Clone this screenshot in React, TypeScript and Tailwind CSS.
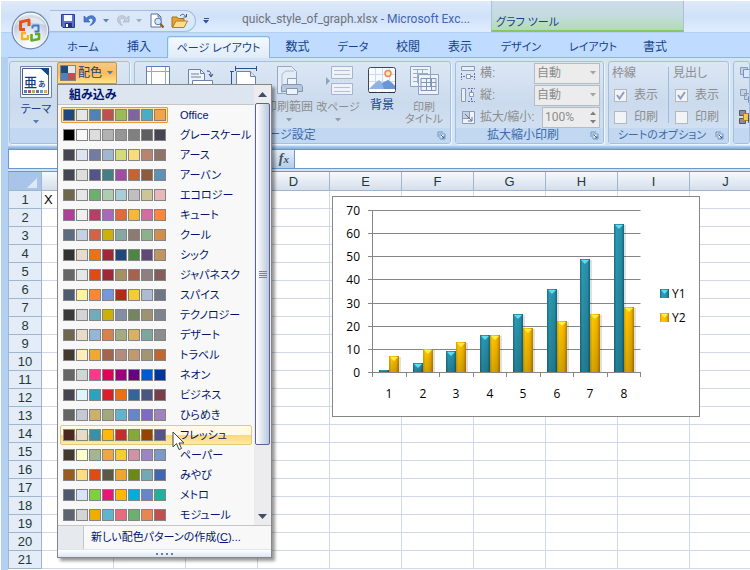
import { useState } from 'react';
import type { ReactNode } from 'react';

const themes = [
  { name: 'Office', colors: ['#1f497d', '#e6e6e6', '#4f81bd', '#c0504d', '#9bbb59', '#8064a2', '#4bacc6', '#f3a447'] },
  { name: 'グレースケール', colors: ['#000000', '#f8f8f8', '#dddddd', '#b2b2b2', '#969696', '#808080', '#5f5f5f', '#464653'] },
  { name: 'アース', colors: ['#464653', '#dde5f0', '#727ca3', '#9fb8cd', '#d2da7a', '#fada7a', '#b88472', '#8e736a'] },
  { name: 'アーバン', colors: ['#464653', '#dedede', '#53548a', '#438086', '#a04da3', '#c4652d', '#8b5d3d', '#5c92b5'] },
  { name: 'エコロジー', colors: ['#6e664d', '#e6e6e6', '#6bb06e', '#b0ccb0', '#a8cdd7', '#bfbfbf', '#cec597', '#e8b7b7'] },
  { name: 'キュート', colors: ['#b13f9a', '#f0f0f0', '#b83d68', '#ac66bb', '#de6c36', '#f9b639', '#cf6da4', '#ff8538'] },
  { name: 'クール', colors: ['#5f6b80', '#c6d1e2', '#d16349', '#ccb00b', '#85a8a3', '#8e7b70', '#8fb08c', '#d19049'] },
  { name: 'シック', colors: ['#323232', '#e6dcc8', '#f07014', '#9f2936', '#1f497d', '#4e8542', '#604878', '#c19464'] },
  { name: 'ジャパネスク', colors: ['#666666', '#e6e6e6', '#de4c14', '#9f2936', '#a68f63', '#a8624c', '#8e8080', '#855d5d'] },
  { name: 'スパイス', colors: ['#4f5b70', '#fff39d', '#ff8637', '#7598d9', '#b32c16', '#f5cd2d', '#aebad5', '#707784'] },
  { name: 'テクノロジー', colors: ['#3b3b3b', '#d4d4d4', '#6eadb9', '#ccaf0a', '#838da3', '#748560', '#9e9273', '#7e848d'] },
  { name: 'デザート', colors: ['#6e664d', '#e6dcc8', '#94b6d8', '#dd8047', '#a5ab81', '#d8b25c', '#7ba79d', '#8c8c8c'] },
  { name: 'トラベル', colors: ['#443b30', '#ffedbc', '#f0a830', '#a5644e', '#b58b80', '#c3986d', '#a19574', '#c4652d'] },
  { name: 'ネオン', colors: ['#666666', '#d4d4d4', '#ff388c', '#e40059', '#9c007f', '#68007f', '#005bd3', '#00349e'] },
  { name: 'ビジネス', colors: ['#464653', '#def5fa', '#2da2bf', '#da1f28', '#eb7013', '#31659c', '#4a5782', '#7d3c4a'] },
  { name: 'ひらめき', colors: ['#646464', '#c5c9d6', '#ceb069', '#a3a97f', '#60b5cc', '#6585cf', '#7e6bc9', '#a082c1'] },
  { name: 'フレッシュ', colors: ['#4e2820', '#e6dcc8', '#3891a7', '#feb80a', '#c32d2e', '#84aa33', '#964305', '#53548a'] },
  { name: 'ペーパー', colors: ['#443b30', '#ffffcc', '#a5b592', '#f3a447', '#f5cd2d', '#d092a7', '#9c85c0', '#7b98c7'] },
  { name: 'みやび', colors: ['#985b20', '#ffdd83', '#de4c14', '#5b5b45', '#f0a62e', '#6b8a14', '#72a9b5', '#4067b1'] },
  { name: 'メトロ', colors: ['#4e5b6f', '#d6e4ff', '#7fd13b', '#ea157a', '#feb80a', '#00addc', '#6585cf', '#1ab39f'] },
  { name: 'モジュール', colors: ['#5f6370', '#d4d4d4', '#f0ad00', '#60b5cc', '#e66c7d', '#6bb06e', '#e88651', '#c24f4d'] },
];

const series = [
  { x: 1, y1: 1, y2: 7 },
  { x: 2, y1: 4, y2: 10 },
  { x: 3, y1: 9, y2: 13 },
  { x: 4, y1: 16, y2: 16 },
  { x: 5, y1: 25, y2: 19 },
  { x: 6, y1: 36, y2: 22 },
  { x: 7, y1: 49, y2: 25 },
  { x: 8, y1: 64, y2: 28 },
];

const columns = ['A', 'B', 'C', 'D', 'E', 'F', 'G', 'H', 'I', 'J'];
const rows = Array.from({ length: 21 }, (_, i) => i + 1);

function Arrow({ className = '' }: { className?: string }) {
  return (
    <svg width="6" height="4" viewBox="0 0 6 4" className={className} aria-hidden="true">
      <path d="M0 0h6L3 3.5z" fill="currentColor" />
    </svg>
  );
}

function OfficeButton() {
  return (
    <button aria-label="Office" className="absolute left-[10px] top-[11px] z-10">
      <svg width="39" height="39" viewBox="0 0 39 39">
        <defs>
          <radialGradient id="orb" cx="50%" cy="85%" r="85%">
            <stop offset="0" stopColor="#ffffff" />
            <stop offset="0.45" stopColor="#e3e8ef" />
            <stop offset="0.75" stopColor="#bcc8d8" />
            <stop offset="1" stopColor="#f2f6fb" />
          </radialGradient>
        </defs>
        <circle cx="19.5" cy="19.5" r="18.3" fill="url(#orb)" stroke="#7289a8" strokeWidth="1.2" />
        <circle cx="19.5" cy="19.5" r="17" fill="none" stroke="#fff" strokeOpacity="0.8" />
        <path d="M5 14a16 13 0 0 1 29 0q-14-5-29 0z" fill="#fff" opacity="0.55" />
        <g fill="none" strokeLinejoin="round">
          <path d="M14 18.500H9.500V11l8.500-2v6" stroke="#e5531c" strokeWidth="3" />
          <path d="M21.500 14.500h6v6H23.500M21.500 17.500v-3" stroke="#3f78c8" strokeWidth="2" />
          <path d="M15 22h-4v6h6v-4" stroke="#f5b51a" strokeWidth="2.400" />
          <path d="M20.500 23v6.500l7.500-1.500v-5h-4" stroke="#5fae2b" strokeWidth="2.600" />
        </g>
      </svg>
    </button>
  );
}

function QuickAccess() {
  return (
    <div className="ml-[49px] mt-[9px] flex h-[22px] w-[146px] items-center rounded-r-full border border-[#a3bde3] border-l-0 bg-[#dbe8fa] pl-[11px]">
      <button aria-label="上書き保存">
        <svg width="14" height="14" viewBox="0 0 14 14">
          <path d="M.5.500h13v13H2l-1.500-1.500z" fill="#5a6fc8" stroke="#2d3a98" />
          <path d="M3 1h8v6H3z" fill="#f4f8ff" />
          <path d="M4 9h7v4.500H4z" fill="#27307a" />
          <path d="M5 10h2v3H5z" fill="#fff" />
        </svg>
      </button>
      <button aria-label="元に戻す" className="ml-2">
        <svg width="14" height="14" viewBox="0 0 14 14">
          <path d="M1 2v6h6L5 6c2-2.500 5-2 5 .5 0 2-1.500 3.500-3 5 3.500-1 5.500-3.500 5.500-6C12.500 1.500 7 0 3.500 4z" fill="#4b7bd0" stroke="#2c56ad" strokeWidth="0.6" />
        </svg>
      </button>
      <Arrow className="ml-[6px] text-[#5c81b8]" />
      <button aria-label="やり直し" className="ml-[7px]">
        <svg width="14" height="14" viewBox="0 0 14 14">
          <path d="M13 2v6H7l2-2C7 3.500 4 4 4 6.500c0 2 1 3.500 2.500 5C3 10.500 1.500 8 1.500 5.500 1.500 1.500 7 0 10.500 4z" fill="#c5cfdd" stroke="#9aa9bd" strokeWidth="0.6" />
        </svg>
      </button>
      <Arrow className="ml-[6px] text-[#a2aebf]" />
      <button aria-label="印刷プレビュー" className="ml-2">
        <svg width="15" height="16" viewBox="0 0 15 16">
          <path d="M1 1h7l3 3v10H1z" fill="#fff" stroke="#5b719b" />
          <path d="M8 1v3h3" fill="none" stroke="#5b719b" />
          <circle cx="8" cy="8.500" r="3.300" fill="#cfe6fb" stroke="#5676a8" />
          <path d="M10.500 11l3 3.500" stroke="#8d5b2a" strokeWidth="2.200" />
        </svg>
      </button>
      <button aria-label="開く" className="ml-[6px]">
        <svg width="17" height="16" viewBox="0 0 17 16">
          <path d="M1 14V4h5l1 1.500h6V14z" fill="#e3a33a" stroke="#a8701a" />
          <path d="M1.500 14.500L5 8h11.500L13 14.500z" fill="#ffdf86" stroke="#b57c22" />
          <path d="M9 3c2-2.500 4.500-2 5.500.5M15.500 1v3h-3" fill="none" stroke="#3d5d8f" />
        </svg>
      </button>
    </div>
  );
}

function TitleBar() {
  return (
    <div className="flex h-[33px] border-b border-[#b4cff0] border-t border-t-white bg-linear-to-b from-[#dfeafa] via-[#d0e1f8] to-[#e0edff]">
      <QuickAccess />
      <button aria-label="クイック アクセス ツール バーのカスタマイズ" className="ml-[7px] flex flex-col items-center justify-center gap-px pt-2 text-[#2c5494]">
        <span className="h-px w-[5px] bg-[#2c5494]" />
        <Arrow />
      </button>
      <h1 className="ml-[33px] w-[249px] whitespace-nowrap pt-[10px] font-['Roboto',sans-serif] text-[12px] leading-4 text-[#6f737a]">
        quick_style_of_graph.xlsx <span className="text-[#4266b0]">- Microsoft Exc...</span>
      </h1>
      <div className="w-[193px] border-x border-[#a9c3dc] border-b-2 border-b-[#86c860] bg-linear-to-b from-[#cbdcec] via-[#c4dbdf] to-[#b3dcb0] pl-1 pt-[13px] text-[11px] leading-4 text-[#15428b]">
        グラフ ツール
      </div>
    </div>
  );
}

const tabs = [
  { label: 'ホーム', style: 'w-[56px] text-[11px]' },
  { label: '挿入', style: 'w-[56px] text-[12px]' },
  { label: 'ページ レイアウト', style: 'w-[103px] text-[11px]' },
  { label: '数式', style: 'w-[55px] text-[12px]' },
  { label: 'データ', style: 'w-[56px] text-[11px]' },
  { label: '校閲', style: 'w-[54px] text-[12px]' },
  { label: '表示', style: 'w-[50px] text-[12px]' },
  { label: 'デザイン', style: 'w-[72px] text-[11px]' },
  { label: 'レイアウト', style: 'w-[72px] text-[11px]' },
  { label: '書式', style: 'w-[52px] text-[12px]' },
];

function Tabs() {
  return (
    <nav className="flex h-6 bg-[#bfdbff] pl-[54px]">
      {tabs.map((t) => (
        <button
          key={t.label}
          className={`${t.style} shrink-0 whitespace-nowrap pt-1 leading-4 text-[#15428b] ${
            t.label === 'ページ レイアウト'
              ? 'relative top-px mt-[2px] rounded-t-[3px] border border-b-0 border-[#8db2e3] bg-linear-to-b from-[#f4f9ff] to-[#e1ebf8] pt-[1px] shadow-[inset_1px_1px_0_#c6f2fb]'
              : ''
          }`}
        >
          {t.label}
        </button>
      ))}
    </nav>
  );
}

function Launcher() {
  return (
    <button aria-label="ダイアログ" className="mr-1">
      <svg width="9" height="9" viewBox="0 0 9 9">
        <path d="M1 6V1h5" fill="none" stroke="#6f93c4" />
        <path d="M3 3h5v5H3z" fill="#fff" stroke="#6f93c4" />
        <path d="M4 4l3 3M7 4.500V7H4.500" fill="none" stroke="#3d639c" />
      </svg>
    </button>
  );
}

function Group({ title, label, width, children }: { title?: string; label: string; width: string; children: ReactNode }) {
  return (
    <section
      aria-label={label}
      className={`${width} flex h-[83px] flex-col rounded-[3px] border border-[#a5c0df] bg-linear-to-b from-[#dce7f5] via-[#cbdbed] to-[#d3e3f4] shadow-[1px_1px_0_#eef6ff]`}
    >
      <div className="flex flex-1">{children}</div>
      <div className="flex h-[15px] items-center bg-[#c1d8f0] text-[12px] leading-[15px] text-[#3e6aaa]">
        {title && (
          <>
            <span className={`flex-1 whitespace-nowrap text-center ${title.length > 7 ? 'text-[11px]' : ''}`}>{title}</span>
            <Launcher />
          </>
        )}
      </div>
    </section>
  );
}

function BigButton({ label, name, width, icon, arrow, disabled }: { label?: ReactNode; name?: string; width: string; icon: ReactNode; arrow?: boolean; disabled?: boolean }) {
  return (
    <button
      disabled={disabled}
      aria-label={name}
      className={`${width} flex shrink-0 flex-col items-center pt-1 text-[12px] leading-3 ${disabled ? 'text-[#8d8d8d]' : 'text-[#15428b]'}`}
    >
      {icon}
      <span className="mt-[5px] whitespace-nowrap">{label}</span>
      {arrow && <Arrow className={`mt-[5px] ${disabled ? 'text-[#9a9a9a]' : 'text-[#567db1]'}`} />}
    </button>
  );
}

const MarginIcon = () => (
  <svg width="28" height="28" viewBox="0 0 28 28">
    <path d="M2.500.500h23v27h-23z" fill="#fff" stroke="#5b7fb5" />
    <path d="M7.500 1v26M21.500 1v26M3 5.500h22M3 22.500h22" stroke="#8ea9cf" />
  </svg>
);

const OrientationIcon = () => (
  <svg width="28" height="28" viewBox="0 0 28 28">
    <path d="M2.500 3.500h12l4 4v18h-16z" fill="#eef3fa" stroke="#6c83a8" />
    <path d="M14.500 3.500v4h4M5 8h8M5 11h10" fill="none" stroke="#6c83a8" />
    <path d="M6.500 14.500h20v11h-20z" fill="#fff" stroke="#6c83a8" />
    <path d="M21 5c3 0 4 1 4 5m-2-2l2 3 2-3" fill="none" stroke="#2e4b7c" />
  </svg>
);

const SizeIcon = () => (
  <svg width="28" height="28" viewBox="0 0 28 28">
    <path d="M5 2.500h22M5.500 0v5M26.500 0v5M1.500 5v22M0 5.500h4" stroke="#2f4f94" />
    <path d="M6.500 5.500h14l5 5v17h-19z" fill="#fff" stroke="#6c83a8" />
    <path d="M20.500 5.500v5h5" fill="#dde6f2" stroke="#6c83a8" />
  </svg>
);

const PrintAreaIcon = () => (
  <svg width="28" height="30" viewBox="0 0 28 30">
    <path d="M2.500.500h14l5 5v22h-19z" fill="#e4ecf6" stroke="#94a8c5" />
    <path d="M7 27V8l4-3h8" fill="none" stroke="#a9bad2" />
    <path d="M12.500 12.500h9v6h-9z" fill="#f2f6fb" stroke="#8ba0be" />
    <path d="M8 18.500h18l1.500 2v5h-21v-5z" fill="#b9c7da" stroke="#8397b5" />
    <path d="M11.500 22.500h11v6h-11z" fill="#eef3f9" stroke="#8397b5" />
  </svg>
);

const BreaksIcon = () => (
  <svg width="30" height="30" viewBox="0 0 30 30">
    <path d="M8.500.500h21v12h-21zM8.500 17.500h21v11h-21z" fill="#eef3fa" stroke="#a4b5cd" />
    <path d="M11 4.500h16M11 8.500h16M11 21.500h16M11 25.500h16" stroke="#b3c1d6" />
    <path d="M3 11l4 4-4 4z" fill="#8ea3c4" />
    <path d="M9 15h20" stroke="#c8d5e6" strokeDasharray="2 2" />
  </svg>
);

const BackgroundIcon = () => (
  <svg width="30" height="28" viewBox="0 0 30 28">
    <rect x="1.500" y="1.500" width="27" height="25" rx="2" fill="#f8fafe" stroke="#3f4854" />
    <path d="M8.500 2v24M15.500 2v24M22.500 2v24M2 8.500h26M2 15.500h26" stroke="#cddaf0" />
    <circle cx="21" cy="7.500" r="3" fill="#ffe9b0" stroke="#ee8254" strokeWidth="1.400" />
    <path d="M2 23l5-5 5-4 3 3 2 2 4-5 4 3 3 3v3z" fill="#8fb3e4" />
    <path d="M15 17l6-3 4 3 3 3v3H17z" fill="#6a96d6" />
    <path d="M2 24.500h26" stroke="#fff" strokeWidth="2" />
    <path d="M2 26.500h8M12 26.500h7M21 26.500h7" stroke="#2d333c" />
  </svg>
);

const TitlesIcon = () => (
  <svg width="30" height="30" viewBox="0 0 30 30">
    <path d="M1.500.500h20v20h-20zM9.500 8.500h20v20h-20z" fill="#eef3fa" stroke="#8ea2c0" />
    <path d="M4 3.500h15M4 7.500h15M4 11.500h5M4 15.500h5M8.500 3v14M13.500 3v5" stroke="#9cadc8" />
    <path d="M12 12.500h15v12H12zM12 16.500h15M12 20.500h15M17.500 12.500v12M22.500 12.500v12" fill="none" stroke="#8195b5" />
  </svg>
);

const ThemeIcon = () => (
  <svg width="32" height="32" viewBox="0 0 32 32">
    <path d="M.5.500h31v31H.5z" fill="#f2f6fb" stroke="#6f83a6" />
    <path d="M2.500 2.500h19l7 7v19h-26z" fill="#fff" stroke="#4b5f8c" />
    <path d="M20 2h9v8z" fill="#17498a" />
    <text x="4" y="21" fontSize="13" fontWeight="500" fill="#163a7c" fontFamily="'Noto Sans CJK JP', sans-serif">亜</text>
    <text x="18" y="21" fontSize="9" fontWeight="500" fill="#163a7c" fontFamily="'Noto Sans CJK JP', sans-serif">ぁ</text>
    <path d="M4 24h3v3H4z" fill="#4f81bd" />
    <path d="M8 24h3v3H8z" fill="#c0504d" />
    <path d="M12 24h3v3h-3z" fill="#9bbb59" />
    <path d="M16 24h3v3h-3z" fill="#8064a2" />
    <path d="M20 24h3v3h-3z" fill="#4bacc6" />
    <path d="M24 24h3v3h-3z" fill="#f3a447" />
  </svg>
);

function ThemeRow({ name, colors, selected, hovered, onSelect }: { name: string; colors: string[]; selected: boolean; hovered: boolean; onSelect: () => void }) {
  return (
    <li className="relative">
      <button
        onClick={onSelect}
        className={`flex h-5 w-full items-center whitespace-nowrap rounded-[2px] border text-left text-[11px] leading-4 text-[#00156e] ${
          hovered ? 'border-[#e4c97c] bg-linear-to-b from-[#fffbe6] from-50% via-[#ffd871] via-50% to-[#ffeaa6]' : 'border-transparent'
        }`}
      >
        <span className={`flex h-4 w-[107px] shrink-0 items-center gap-px rounded-[1px] border pl-px ${selected ? 'border-[#f29536] bg-[#ffe8a2]' : 'border-transparent'}`}>
          {colors.map((c, i) => (
            <span key={i} className="size-3 border border-[#848484]" style={{ backgroundColor: c }} />
          ))}
        </span>
        <span className="ml-3">{name}</span>
      </button>
      {hovered && (
        <svg width="13" height="20" viewBox="0 0 13 20" className="absolute left-[112px] top-[6px]" aria-hidden="true">
          <path d="M1 1v15l3.500-3.500L7 18.500l2.500-1L7 12h5z" fill="#fff" stroke="#3c4254" />
        </svg>
      )}
    </li>
  );
}

function ColorMenu() {
  const [selected, setSelected] = useState('Office');

  return (
    <div className="absolute left-0 top-full z-20 w-[215px] border border-[#868686] bg-[#f8f8f8] shadow-[3px_3px_3px_rgba(0,0,0,0.4)]">
      <div className="flex">
        <div className="min-w-0 flex-1">
          <h2 className="h-5 border-b border-[#c5c5c5] bg-[#dde5f0] pl-[11px] pt-[2px] text-[12px] font-bold leading-4 text-[#00156e]">組み込み</h2>
          <ul className="px-[2px]">
            {themes.map((t) => (
              <ThemeRow
                key={t.name}
                name={t.name}
                colors={t.colors}
                selected={selected === t.name}
                hovered={t.name === 'フレッシュ'}
                onSelect={() => setSelected(t.name)}
              />
            ))}
          </ul>
        </div>
        <div className="flex w-[17px] shrink-0 flex-col items-center bg-[#ececef] text-[#3f4d6b]">
          <button aria-label="上へ" className="flex h-[18px] w-full items-center justify-center">
            <svg width="9" height="5" viewBox="0 0 9 5"><path d="M0 5h9L4.500 0z" fill="currentColor" /></svg>
          </button>
          <div className="flex h-[342px] w-[15px] flex-col items-center justify-center gap-px rounded-[2px] border border-[#5c6294] bg-linear-to-r from-[#ffffff] via-[#e6e9ef] via-40% to-[#b6c9de]">
            <span className="h-px w-2 bg-[#7a8290]" />
            <span className="h-px w-2 bg-[#7a8290]" />
            <span className="h-px w-2 bg-[#7a8290]" />
            <span className="h-px w-2 bg-[#7a8290]" />
          </div>
          <button aria-label="下へ" className="mt-auto flex h-[18px] w-full items-center justify-center">
            <svg width="9" height="5" viewBox="0 0 9 5"><path d="M0 0h9L4.500 5z" fill="currentColor" /></svg>
          </button>
        </div>
      </div>
      <button className="flex h-6 w-full items-center border-t border-[#c5c5c5] text-[11px] text-[#00156e]">
        <span className="h-full w-[26px] border-r border-[#c5c9cf] bg-[#e6eaef]" />
        <span className="ml-[7px] whitespace-nowrap">
          新しい配色パターンの作成(<u>C</u>)...
        </span>
      </button>
      <div className="flex h-2 items-center justify-center gap-[3px] border-t border-[#dfe6f0] bg-linear-to-b from-white to-[#dbe5f3]">
        <span className="size-[2px] bg-[#6c7fa3]" />
        <span className="size-[2px] bg-[#6c7fa3]" />
        <span className="size-[2px] bg-[#6c7fa3]" />
        <span className="size-[2px] bg-[#6c7fa3]" />
      </div>
    </div>
  );
}

function ScaleSelect({ id, label, vertical }: { id: string; label: string; vertical?: boolean }) {
  return (
    <div className="flex h-[22px] items-center">
      <svg width="16" height="16" viewBox="0 0 16 16" className={vertical ? '-rotate-90' : ''} aria-hidden="true">
        <path d="M1.500 1.500h13v4h-13z" fill="#e8eef6" stroke="#8a9bb8" />
        <path d="M1.500 8v7M14.500 8v7M3 11.500h2M11 11.500h2" stroke="#6b6fae" strokeDasharray="2 1" />
        <path d="M6.500 9.500h4v4h-4z" fill="#f5f8fc" stroke="#8a9bb8" />
      </svg>
      <label htmlFor={id} className="ml-1">{label}</label>
      <div className="relative ml-auto">
        <select id={id} disabled className="h-[21px] w-[66px] appearance-none border border-[#b6bcc4] bg-[#ececec] pl-[2px] text-[12px] text-[#8d8d8d] opacity-100">
          <option>自動</option>
        </select>
        <Arrow className="pointer-events-none absolute right-1 top-2 text-[#a2a2a2]" />
      </div>
    </div>
  );
}

function OptionColumn({ title, id }: { title: string; id: string }) {
  return (
    <div className="w-[56px] text-[12px] leading-4 text-[#8d8d8d]">
      <div className="h-[22px] pt-[3px]">{title}</div>
      {['表示', '印刷'].map((label, i) => (
        <div key={label} className="flex h-[22px] items-center pl-[2px]">
          <span className="relative flex size-[13px]">
            <input
              id={`${id}-${i}`}
              type="checkbox"
              defaultChecked={i === 0}
              disabled
              className="peer size-[13px] appearance-none border border-[#b2b8c0] bg-[#f1f3f5]"
            />
            <svg width="13" height="13" viewBox="0 0 13 13" className="pointer-events-none absolute inset-0 hidden peer-checked:block">
              <path d="M3 6l2.500 3.500L10 3" fill="none" stroke="#8ba0c4" strokeWidth="2" />
            </svg>
          </span>
          <label htmlFor={`${id}-${i}`} className="ml-[7px] whitespace-nowrap">{label}</label>
        </div>
      ))}
    </div>
  );
}

function Ribbon() {
  return (
    <div className="flex gap-1 border-t border-[#8db2e3] bg-[#d5e4f5] pb-[2px] pl-px pt-[3px]">
      <Group label="テーマ" width="w-[121px] shrink-0">
        <BigButton label={<span className="text-[11px]">テーマ</span>} width="w-[47px] pl-[5px]" icon={<ThemeIcon />} arrow />
        <div className="relative h-[22px]">
          <button className="flex h-[22px] w-[60px] items-center rounded-t-[2px] border border-[#b89a5c] bg-linear-to-b from-[#f6c983] via-[#fdb95c] to-[#fde48a] pl-[2px] text-[12px] leading-4 text-[#15428b]">
            <svg width="16" height="16" viewBox="0 0 16 16" aria-hidden="true">
              <path d="M0 0h16v16H0z" fill="#848484" />
              <path d="M1 1h7v7H1z" fill="#1f497d" />
              <path d="M8 1h7v7H8z" fill="#e6e6e6" />
              <path d="M1 8h7v7H1z" fill="#4f81bd" />
              <path d="M8 8h7v7H8z" fill="#c0504d" />
            </svg>
            <span className="ml-[2px] whitespace-nowrap">配色</span>
            <Arrow className="ml-[5px] shrink-0 text-[#4f7bb5]" />
          </button>
          <ColorMenu />
        </div>
      </Group>

      <Group title="ページ設定" label="ページ設定" width="w-[317px] shrink-0">
        <BigButton name="余白" width="w-[46px]" icon={<MarginIcon />} />
        <BigButton name="印刷の向き" width="w-[38px]" icon={<OrientationIcon />} />
        <BigButton name="サイズ" width="w-[49px]" icon={<SizeIcon />} />
        <BigButton label="印刷範囲" width="w-[42px]" icon={<PrintAreaIcon />} arrow disabled />
        <BigButton label={<span className="text-[11px]">改ページ</span>} width="w-[56px]" icon={<BreaksIcon />} arrow disabled />
        <BigButton label="背景" width="w-[32px]" icon={<BackgroundIcon />} />
        <BigButton label={<span className="text-[11px]">印刷<br />タイトル</span>} width="w-[52px]" icon={<TitlesIcon />} disabled />
      </Group>

      <Group title="拡大縮小印刷" label="拡大縮小印刷" width="w-[149px] shrink-0">
        <div className="flex-1 pl-1 pr-[3px] text-[12px] leading-4 text-[#8d8d8d]">
          <ScaleSelect id="scale-width" label="横:" />
          <ScaleSelect id="scale-height" label="縦:" vertical />
          <div className="flex h-[22px] items-center">
            <svg width="16" height="16" viewBox="0 0 16 16" aria-hidden="true">
              <path d="M2.500 2.500h12v12h-12z" fill="#f0f4f9" stroke="#8a9bb8" />
              <path d="M2.500 2.500h7v7h-7z" fill="#c4d0e2" stroke="#8a9bb8" />
              <path d="M5 5l7 7M8 12h4V8" fill="none" stroke="#5d6f92" />
            </svg>
            <label htmlFor="scale-percent" className="ml-1 whitespace-nowrap">拡大/縮小:</label>
            <div className="relative ml-auto">
              <input id="scale-percent" disabled defaultValue="100%" className="h-[21px] w-[58px] border border-[#b6bcc4] bg-[#ececec] pl-[2px] font-['Roboto',sans-serif] text-[12px]" />
              <span className="absolute right-1 top-1 flex flex-col gap-[5px] text-[#7f7f7f]">
                <Arrow className="rotate-180" />
                <Arrow />
              </span>
            </div>
          </div>
        </div>
      </Group>

      <Group title="シートのオプション" label="シートのオプション" width="w-[121px] shrink-0">
        <div className="flex pl-[3px]">
          <OptionColumn title="枠線" id="gridlines" />
          <span className="mr-1 mt-[5px] h-[56px] w-px bg-[#9dbbe0]" />
          <OptionColumn title="見出し" id="headings" />
        </div>
      </Group>

      <Group label="配置" width="min-w-0 flex-1 overflow-hidden">
        <svg width="30" height="66" viewBox="0 0 30 66" aria-hidden="true" className="ml-[5px] shrink-0">
          <path d="M1.500 5.500h7v7h-7zM10.500 11.500h8v7h-8z" fill="#c6d2e3" stroke="#8b9dbb" />
          <path d="M4.500 7.500h10v8h-10z" fill="#dce7f6" stroke="#7592c4" />
          <path d="M1.500 27.500h6v6h-6zM5.500 31.500h6v6h-6z" fill="#c6d2e3" stroke="#8b9dbb" />
          <path d="M9.500 34.500h9v6h-9z" fill="#dce7f6" stroke="#7592c4" />
          <path d="M.5 48.500h6v5h-6zM.5 56.500h6v5h-6z" fill="#8b8f97" stroke="#55585f" />
          <path d="M4.500 51.500h7v7h-7z" fill="#ffc34d" stroke="#b97a13" />
          <path d="M9.500 52.500h9v8h-9z" fill="#fff" stroke="#3f4f70" />
        </svg>
      </Group>
    </div>
  );
}

function FormulaBar() {
  return (
    <div className="border-b border-[#6d97c8] bg-[#d5e4f5] pb-[2px]">
      <div className="flex h-5 border-y border-l border-[#6d97c8] bg-white">
        <input aria-label="名前ボックス" className="w-[200px] px-1 text-[12px] outline-none" />
        <button className="w-[86px] border-x border-[#6d97c8] bg-linear-to-b from-[#e4edf8] to-[#b3cdec] pr-[5px] text-right font-['Liberation_Serif',serif] text-[14px] font-bold italic leading-4 text-[#47515f]">
          f<span className="text-[11px]">x</span>
        </button>
        <input aria-label="数式バー" className="min-w-0 flex-1 px-1 text-[12px] outline-none" />
      </div>
    </div>
  );
}

function Chart() {
  const base = 176;
  const unit = 162 / 70;
  const top = (v: number) => Math.round(base - v * unit);

  const bar = (x: number, v: number, fill: string, light: string) => (
    <g>
      <rect x={x + 1} y={top(v) + 1} width="11" height={base - top(v)} fill="#000" opacity="0.12" />
      <rect x={x} y={top(v)} width="10" height={base - top(v)} fill={`url(#${fill})`} />
      <rect x={x} y={top(v)} width="10" height={base - top(v)} fill="url(#shade)" />
      {v > 2 && <path d={`M${x + 1} ${top(v) + 1}h8l-4 4z`} fill={light} />}
    </g>
  );

  return (
    <svg width="368" height="221" viewBox="0 0 368 221" className="absolute left-[324px] top-6 font-['Open_Sans','Noto_Sans',sans-serif] text-[12px]" role="img" aria-label="Y1 Y2">
      <defs>
        <linearGradient id="teal">
          <stop offset="0" stopColor="#1c7388" />
          <stop offset="0.25" stopColor="#2c9bb5" />
          <stop offset="0.75" stopColor="#268fa8" />
          <stop offset="1" stopColor="#186273" />
        </linearGradient>
        <linearGradient id="gold">
          <stop offset="0" stopColor="#dc9e00" />
          <stop offset="0.25" stopColor="#ffca00" />
          <stop offset="0.7" stopColor="#f8b600" />
          <stop offset="1" stopColor="#b88000" />
        </linearGradient>
        <linearGradient id="shade" x2="0" y2="1">
          <stop offset="0" stopColor="#000" stopOpacity="0" />
          <stop offset="1" stopColor="#000" stopOpacity="0.18" />
        </linearGradient>
      </defs>
      <rect x="0.5" y="0.5" width="367" height="220" fill="#fff" stroke="#868686" />
      {[0, 10, 20, 30, 40, 50, 60, 70].map((v) => (
        <g key={v}>
          <path d={`M36 ${top(v) + 0.5}H308.500`} stroke="#868686" />
          <text x="28" y={top(v) + 5} textAnchor="end">{v}</text>
        </g>
      ))}
      <path d="M40.500 14v162" stroke="#868686" />
      {series.map((p, i) => {
        const left = Math.round(40 + i * 33.5);
        return (
          <g key={p.x}>
            {bar(left + 7, p.y1, 'teal', '#5fdcf2')}
            {bar(left + 17, p.y2, 'gold', '#fff04a')}
            <path d={`M${left + 0.5} 176v5`} stroke="#868686" />
            <text x={left + 17} y="202" textAnchor="middle">{p.x}</text>
          </g>
        );
      })}
      <path d="M308.500 176v5" stroke="#868686" />
      <path d="M36 176.500H308.500" stroke="#868686" />
      <rect x="328" y="93" width="9" height="9" fill="url(#teal)" />
      <path d="M329 94h7l-3.500 4z" fill="#5fdcf2" />
      <text x="340" y="102">Y1</text>
      <rect x="328" y="117" width="9" height="9" fill="url(#gold)" />
      <path d="M329 118h7l-3.500 4z" fill="#fff04a" />
      <text x="340" y="126">Y2</text>
    </svg>
  );
}

function Sheet() {
  return (
    <div className="relative flex-1 overflow-hidden bg-white">
      <table className="w-[754px] table-fixed border-separate border-spacing-0 text-[13px] leading-4 text-[#1f3a3a]">
        <colgroup>
          <col className="w-[34px]" />
          {columns.map((c) => (
            <col key={c} className="w-[72px]" />
          ))}
        </colgroup>
        <thead>
          <tr className="h-[19px]">
            <th className="border-b border-l border-r border-[#9eb6ce] bg-[#a9c4e9] p-0">
              <svg width="10" height="10" viewBox="0 0 10 10" className="ml-auto mr-1 mt-1" aria-hidden="true">
                <path d="M10 0v10H0z" fill="#dfe9f6" />
              </svg>
            </th>
            {columns.map((c) => (
              <th key={c} className="border-b border-r border-[#9eb6ce] bg-linear-to-b from-[#f6f9fc] to-[#d5deea] p-0 pt-px font-normal">{c}</th>
            ))}
          </tr>
        </thead>
        <tbody>
          {rows.map((r) => (
            <tr key={r} className="h-[18px]">
              <th className="border-b border-l border-r border-[#9eb6ce] bg-[#e4ecf7] p-0 pt-px font-normal">{r}</th>
              {columns.map((c) => (
                <td key={c} className="border-b border-r border-[#d0d7e5] p-0 pl-[2px] pt-px text-black">{r === 1 && c === 'A' ? 'X' : ''}</td>
              ))}
            </tr>
          ))}
        </tbody>
      </table>
      <Chart />
    </div>
  );
}

export default function App() {
  return (
    <div className="relative flex h-screen min-w-0 flex-col overflow-hidden border-l border-white bg-[#bfdbff] font-['Liberation_Sans','Noto_Sans_CJK_JP',sans-serif] [font-feature-settings:'palt']">
      <OfficeButton />
      <TitleBar />
      <Tabs />
      <div className="flex flex-1 flex-col bg-[#b3d0f2] pl-[7px]">
        <Ribbon />
        <div className="h-[3px] bg-linear-to-b from-[#b5d0ee] to-[#84abd8]" />
        <FormulaBar />
        <Sheet />
      </div>
    </div>
  );
}
